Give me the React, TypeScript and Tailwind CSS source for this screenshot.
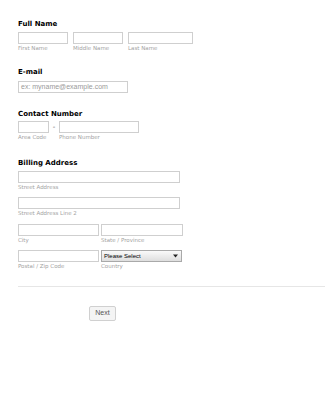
import React from 'react'

const sub = 'block h-[7px] leading-[7px] text-[5.5px] text-[#a3a3a3] mt-[1px] whitespace-nowrap'
const box = 'block h-[12px] border border-[#cfcfcf] bg-white'
const head = 'h-[8px] leading-[8px] text-[7px] font-bold text-black'

function Field({ w, label, className = '' }: { w: string; label?: string; className?: string }) {
  return (
    <div className={className}>
      <div className={`${box} ${w}`} />
      {label && <span className={sub}>{label}</span>}
    </div>
  )
}

export default function App() {
  return (
    <div className="min-h-[400px] w-[325px] bg-white pt-[20px] pl-[18px]" style={{ fontFamily: '"DejaVu Sans", Verdana, sans-serif' }}>
      <div className={head}>Full Name</div>
      <div className="mt-[4px] flex gap-[5px]">
        <Field w="w-[50px]" label="First Name" />
        <Field w="w-[50px]" label="Middle Name" />
        <Field w="w-[65px]" label="Last Name" />
      </div>

      <div className={`${head} mt-[16px]`}>E-mail</div>
      <div className={`${box} w-[110px] mt-[5px] flex items-center pl-[2px] text-[7px] text-[#9a9a9a]`} style={{ fontFamily: '"Liberation Sans", Arial, sans-serif' }}>
        ex: myname@example.com
      </div>

      <div className={`${head} mt-[17px]`}>Contact Number</div>
      <div className="mt-[3px] flex">
        <Field w="w-[31px]" label="Area Code" />
        <span className="w-[10px] h-[12px] leading-[12px] text-center text-[7px] text-[#555]">-</span>
        <Field w="w-[80px]" label="Phone Number" />
      </div>

      <div className={`${head} mt-[18px]`}>Billing Address</div>
      <Field className="mt-[4px]" w="w-[162px]" label="Street Address" />
      <Field className="mt-[6px]" w="w-[162px]" label="Street Address Line 2" />
      <div className="mt-[7px] flex gap-[2px]">
        <Field w="w-[81px]" label="City" />
        <Field w="w-[82px]" label="State / Province" />
      </div>
      <div className="mt-[6px] flex gap-[2px]">
        <Field w="w-[81px]" label="Postal / Zip Code" />
        <div>
          <div
            className="flex h-[12px] w-[81px] items-center justify-between border border-[#a9a9a9] bg-gradient-to-b from-[#fafafa] to-[#dedede] pl-[2px] pr-[3px] text-[6px] font-medium text-black"
            style={{ fontFamily: '"Liberation Sans", Arial, sans-serif' }}
          >
            <span>Please Select</span>
            <svg width="5" height="4" viewBox="0 0 5 4"><path d="M0 0.5h5L2.5 3.5z" fill="#222" /></svg>
          </div>
          <span className={sub}>Country</span>
        </div>
      </div>

      <div className="mt-[16px] h-px bg-[#e6e6e6]" />

      <div className="mt-[11px] pl-[71px]">
        <button
          className="h-[15px] w-[27px] rounded-[2px] border border-[#d0d0d0] bg-[#f4f4f4] text-[7px] text-[#555]"
          style={{ fontFamily: '"Liberation Sans", Arial, sans-serif' }}
        >
          Next
        </button>
      </div>
    </div>
  )
}
